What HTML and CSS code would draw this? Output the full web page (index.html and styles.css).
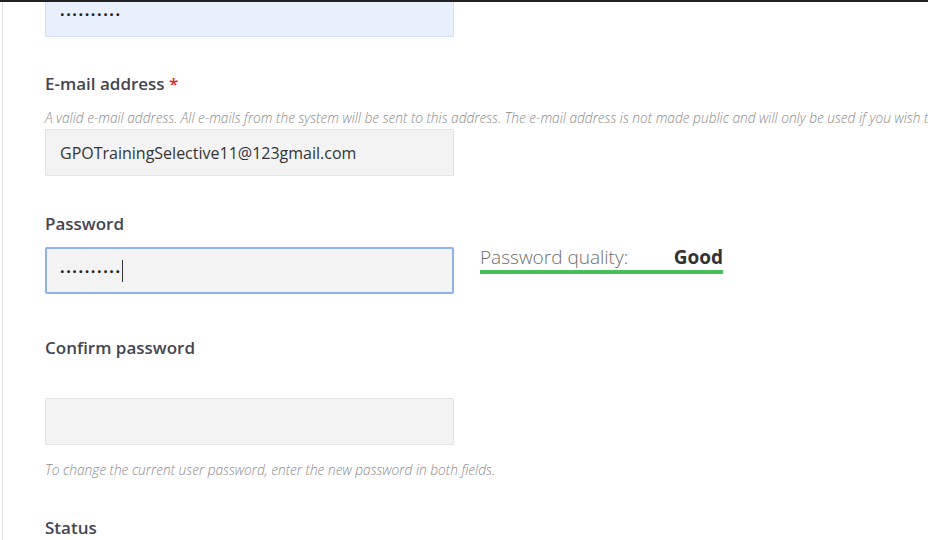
FILE: index.html
```html
<!DOCTYPE html>
<html>
<head>
    <link rel="stylesheet" href="styles.css">
</head>
<body>
    <div class="topbar"></div>
    <div class="page">
        <div class="form">

            <div class="field field-autofill first"><span class="dots">..........</span></div>

            <label class="label label-email">E-mail address <span class="required">*</span></label>
            <div class="description desc-email">A valid e-mail address. All e-mails from the system will be sent to this address. The e-mail address is not made public and will only be used if you wish to receive a new password.</div>
            <input type="text" class="field" value="GPOTrainingSelective11@123gmail.com">

            <label class="label label-pass">Password</label>
            <div class="pass-row">
                <div class="field-focus"><span class="dots">..........</span><span class="caret"></span></div>
                <div class="quality">
                    <div class="quality-text">
                        <span>Password quality:</span>
                        <span class="quality-value">Good</span>
                    </div>
                    <div class="quality-bar"></div>
                </div>
            </div>

            <label class="label label-confirm">Confirm password</label>
            <input type="password" class="field field-confirm">
            <div class="description desc-confirm">To change the current user password, enter the new password in both fields.</div>

            <label class="label label-status">Status</label>
        </div>
    </div>
</body>
</html>
```

FILE: styles.css
```css
body {
    margin: 0;
    font-family: "Open Sans", Arial, sans-serif;
    background-color: #fff;
    overflow: hidden;
}
.topbar {
    height: 2px;
    background-color: #222;
}
.page {
    height: 538px;
    margin-left: 2px;
    border-left: 1px solid #e2e2e2;
    overflow: hidden;
}
.form {
    padding-left: 42px;
}
.field {
    display: block;
    box-sizing: border-box;
    width: 409px;
    height: 47px;
    padding: 0 14px;
    margin: 0;
    background-color: #f3f3f3;
    border: 1px solid #e3e3e3;
    border-radius: 1px;
    font-family: "Open Sans", Arial, sans-serif;
    font-size: 16px;
    color: #333;
    outline: none;
}
.field-autofill {
    display: flex;
    align-items: center;
    background-color: #e8f0fe;
    border-color: #d6dff0;
}
.first {
    margin-top: -12px;
}
.label {
    display: block;
    font-size: 17px;
    font-weight: 600;
    line-height: 24px;
    color: #45454f;
}
.required {
    color: #e32626;
}
.label-email {
    margin-top: 35px;
}
.label-pass {
    margin-top: 36px;
    margin-bottom: 11px;
}
.label-confirm {
    margin-top: 42px;
    margin-bottom: 38px;
}
.label-status {
    margin-top: 37px;
}
.description {
    font-size: 13.7px;
    font-style: italic;
    font-weight: 300;
    line-height: 18px;
    color: #8a8a8a;
    white-space: nowrap;
}
.desc-email {
    margin-top: 13px;
    margin-bottom: 2px;
}
.desc-confirm {
    margin-top: 16px;
}
.pass-row {
    display: flex;
    align-items: flex-start;
    gap: 26px;
}
.field-focus {
    display: flex;
    align-items: center;
    box-sizing: border-box;
    width: 409px;
    height: 47px;
    padding: 0 14px;
    background-color: #f3f3f3;
    border: 2px solid #8db3ee;
    border-radius: 2px;
}
.field-focus .dots {
    margin-left: -1px;
}
.dots {
    font-size: 16px;
    font-weight: 700;
    letter-spacing: 1.6px;
    color: #222;
    line-height: 1;
    margin-top: -8px;
}
.caret {
    width: 1px;
    height: 22px;
    background-color: #333;
}
.quality {
    width: 243px;
    margin-top: -3px;
}
.quality-text {
    display: flex;
    justify-content: space-between;
    font-size: 19px;
    line-height: 26px;
    color: #6e6e6e;
    font-weight: 300;
}
.quality-value {
    font-weight: 700;
    color: #333;
}
.quality-bar {
    height: 4px;
    margin-top: 0;
    background-color: #4ac05a;
}
```
